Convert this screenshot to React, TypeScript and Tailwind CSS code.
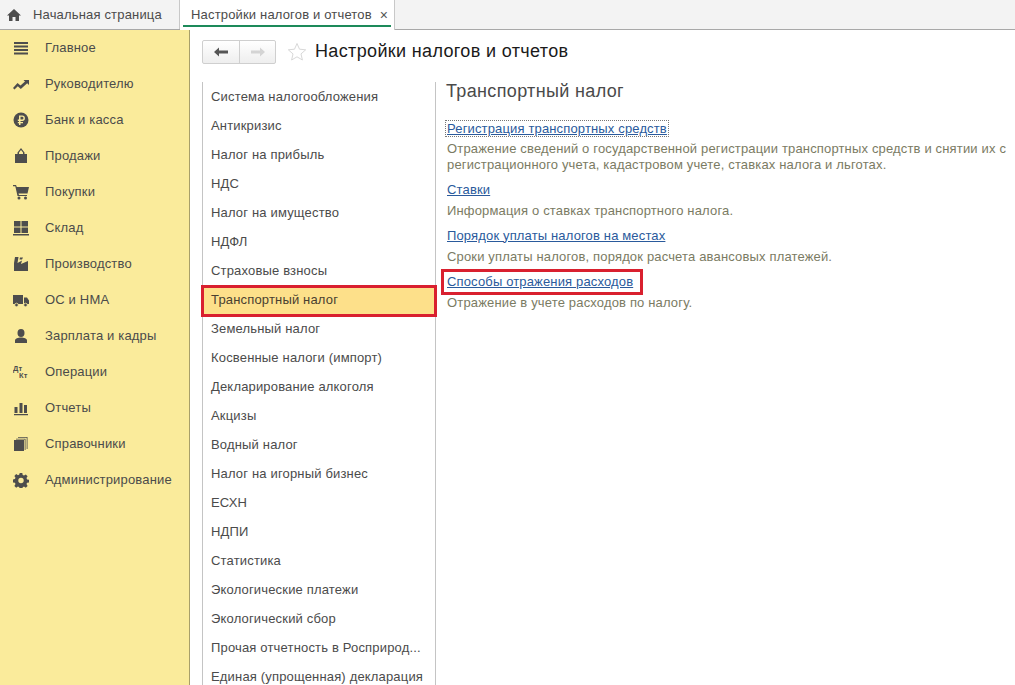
import type { ReactNode } from 'react';

const font = 'font-["Liberation_Sans",Arial,sans-serif]';

const Ico = ({ children }: { children: ReactNode }) => (
  <svg viewBox="0 0 16 16" className="w-4 h-4 shrink-0 text-[#4d4d4d]" fill="currentColor">
    {children}
  </svg>
);

const menu: { label: string; icon: ReactNode }[] = [
  {
    label: 'Главное',
    icon: <path d="M1 2h14v2H1zM1 5.500h14v2H1zM1 9h14v2H1zM1 12.500h14v2H1z" />,
  },
  {
    label: 'Руководителю',
    icon: <path d="M0 12l4.500-5 3 2.500L12 5.500 10.500 4H16v5l-1.800-1.800L7.800 13 4.800 10.300 1.500 13.500z" />,
  },
  {
    label: 'Банк и касса',
    icon: (
      <>
        <circle cx="8" cy="8" r="7.500" />
        <path fill="#faeb9b" d="M6 3.500h3.200a2.700 2.700 0 010 5.400H7.500V10H10v1.300H7.500V13H6v-1.700H4.800V10H6V8.900H4.800V7.600H6zm1.500 1.300v2.800h1.600a1.400 1.400 0 000-2.800z" />
      </>
    ),
  },
  {
    label: 'Продажи',
    icon: <path fillRule="evenodd" d="M2 6h2.500V4.500L8 0l3.500 4.500V6H14v9H2zM6 6h4V4.500L8 2 6 4.500z" />,
  },
  {
    label: 'Покупки',
    icon: (
      <>
        <path d="M0 1h3l.8 2H16l-1.500 6.500H5.500L6 11h8v1H4.500L2.300 2.300H0z" />
        <circle cx="6" cy="14" r="1.500" />
        <circle cx="12.500" cy="14" r="1.500" />
      </>
    ),
  },
  {
    label: 'Склад',
    icon: <path d="M1 1h6.500v5.500H1zM8.500 1H15v5.500H8.500zM1 7.500h6.500V13H1zM8.500 7.500H15V13H8.500zM0 14h16v1.500H0z" />,
  },
  {
    label: 'Производство',
    icon: <path d="M1 15V7l1-6h3.500l-1 6L9 4.500 8 8l7-3v10zM7 1.500h3L9 3.500H6.500z" />,
  },
  {
    label: 'ОС и НМА',
    icon: (
      <>
        <path d="M0 3h10v9H0zM11 5.500h3l2 3V12h-5z" />
        <circle cx="3.500" cy="13" r="1.800" stroke="#faeb9b" strokeWidth="0.800" />
        <circle cx="12.500" cy="13" r="1.800" stroke="#faeb9b" strokeWidth="0.800" />
      </>
    ),
  },
  {
    label: 'Зарплата и кадры',
    icon: (
      <>
        <ellipse cx="8" cy="5" rx="3.500" ry="4" />
        <path d="M2 15v-2.500C2 10.500 5 9.500 8 9.500s6 1 6 3V15z" />
      </>
    ),
  },
  {
    label: 'Операции',
    icon: (
      <>
        <text x="0" y="7" fontSize="7.500" fontWeight="700" fontFamily="Liberation Sans">Дт</text>
        <text x="6" y="14" fontSize="7.500" fontWeight="700" fontFamily="Liberation Sans">Кт</text>
      </>
    ),
  },
  {
    label: 'Отчеты',
    icon: <path d="M1.500 7h3v6h-3zM6.500 3h3v10h-3zM11 5h3v8h-3zM1 14h14v1.200H1z" />,
  },
  {
    label: 'Справочники',
    icon: (
      <>
        <path d="M1 4h10v11H1z" />
        <path d="M3 2.700h9.500V14h-.8V3.500H3zM5 1h9.500v12h-.8V1.800H5z" />
      </>
    ),
  },
  {
    label: 'Администрирование',
    icon: (
      <path
        fillRule="evenodd"
        d="M6.700 1h2.600l.4 2 1.300.6 1.800-1.100 1.800 1.800-1.100 1.800.6 1.300 2 .4v2.600l-2 .4-.6 1.300 1.100 1.800-1.800 1.800-1.800-1.100-1.300.6-.4 2H6.700l-.4-2-1.300-.6-1.800 1.100-1.800-1.800 1.100-1.800-.6-1.300-2-.4V7.400l2-.4.600-1.300-1.100-1.800 1.800-1.800 1.800 1.100 1.300-.6zM8 5.800a2.700 2.700 0 100 5.400 2.700 2.700 0 000-5.400z"
      />
    ),
  },
];

const sections = [
  'Система налогообложения',
  'Антикризис',
  'Налог на прибыль',
  'НДС',
  'Налог на имущество',
  'НДФЛ',
  'Страховые взносы',
  'Транспортный налог',
  'Земельный налог',
  'Косвенные налоги (импорт)',
  'Декларирование алкоголя',
  'Акцизы',
  'Водный налог',
  'Налог на игорный бизнес',
  'ЕСХН',
  'НДПИ',
  'Статистика',
  'Экологические платежи',
  'Экологический сбор',
  'Прочая отчетность в Росприрод...',
  'Единая (упрощенная) декларация',
];

const links = [
  {
    title: 'Регистрация транспортных средств',
    text: [
      'Отражение сведений о государственной регистрации транспортных средств и снятии их с',
      'регистрационного учета, кадастровом учете, ставках налога и льготах.',
    ],
    focus: true,
  },
  { title: 'Ставки', text: ['Информация о ставках транспортного налога.'] },
  {
    title: 'Порядок уплаты налогов на местах',
    text: ['Сроки уплаты налогов, порядок расчета авансовых платежей.'],
  },
  {
    title: 'Способы отражения расходов',
    text: ['Отражение в учете расходов по налогу.'],
    marked: true,
  },
];

export default function App() {
  return (
    <div className={`${font} w-[1015px] h-[685px] overflow-hidden bg-white flex flex-col text-[13px] tracking-[0.17px] text-[#4b4b4b]`}>
      {/* tabs */}
      <div className="h-[30px] shrink-0 flex bg-[#f3f3f3] border-b border-[#a8a8a8]">
        <div className="w-[180px] flex items-center border-r border-[#c8c8c8]">
          <svg viewBox="0 0 16 16" className="w-4 h-4 ml-[6px] text-[#4d4d4d]" fill="currentColor">
            <path d="M8 2L1 8.500h2V14h3.500v-4h3v4H13V8.500h2z" />
          </svg>
          <span className="ml-[11px]">Начальная страница</span>
        </div>
        <div className="w-[215px] h-[30px] bg-white border-r border-[#c8c8c8] relative flex items-center pl-[11px]">
          <span>Настройки налогов и отчетов</span>
          <span className="ml-[8px] text-[#555] text-[14px] leading-none">×</span>
          <div className="absolute left-[3px] right-[3px] bottom-[3px] h-[2px] bg-[#1d8a5a]" />
        </div>
      </div>

      <div className="flex-1 flex min-h-0">
        {/* sidebar */}
        <div className="w-[190px] shrink-0 bg-[#faeb9b] border-r border-[#a89f6a] flex flex-col">
          {menu.map((m) => (
            <div key={m.label} className="h-[36px] flex items-center pl-[13px] gap-[16px]">
              <Ico>{m.icon}</Ico>
              <span className="whitespace-nowrap">{m.label}</span>
            </div>
          ))}
        </div>

        <div className="flex-1 min-w-0 flex flex-col pl-[12px]">
          {/* title */}
          <div className="h-[52px] shrink-0 flex items-center pb-[9px]">
            <div className="flex h-[24px] w-[74px] border border-[#cfcfcf] rounded-[2px] bg-gradient-to-b from-white to-[#eeeeee]">
              <div className="w-[37px] flex items-center justify-center border-r border-[#cfcfcf]">
                <svg viewBox="0 0 14 10" className="w-[14px] h-[10px] text-[#555]" fill="currentColor">
                  <path d="M0 5l5-4.500V3.500h9v3H5v3z" />
                </svg>
              </div>
              <div className="flex-1 flex items-center justify-center">
                <svg viewBox="0 0 14 10" className="w-[14px] h-[10px] text-[#d4d4d4]" fill="currentColor">
                  <path d="M14 5L9 .5V3.500H0v3h9v3z" />
                </svg>
              </div>
            </div>
            <svg viewBox="0 0 20 20" className="w-[20px] h-[20px] ml-[11px] text-[#d8d8d8]" fill="none" stroke="currentColor">
              <path d="M10 1.500l2.500 5.700 6.200.6-4.700 4.100 1.400 6.100L10 14.800l-5.400 3.200L6 11.900 1.300 7.800l6.200-.6z" />
            </svg>
            <span className="ml-[8px] text-[18px] tracking-[0.35px] text-[#1a1a1a]">Настройки налогов и отчетов</span>
          </div>

          <div className="flex-1 flex min-h-0">
            {/* sections list */}
            <div className="w-[234px] shrink-0 border-l border-r border-[#c4c4c4] flex flex-col">
              {sections.map((s) => {
                const active = s === 'Транспортный налог';
                return (
                  <div key={s} className="relative h-[29px] shrink-0 flex items-center pl-[8px] whitespace-nowrap">
                    {active && (
                      <div className="absolute -left-[2px] -right-[2px] top-0 -bottom-[3px] bg-[#fde08a] border-[3px] border-[#d9202f]" />
                    )}
                    <span className={active ? 'relative text-[#4a4030]' : ''}>{s}</span>
                  </div>
                );
              })}
            </div>

            {/* details */}
            <div className="flex-1 min-w-0 pl-[10px]">
              <div className="text-[18px] text-[#4a4a4a] leading-[22px] -mt-[2px] tracking-[0.35px]">Транспортный налог</div>
              <div className="mt-[16px] flex flex-col">
                {links.map((l) => (
                  <div key={l.title} className="mb-[6px]">
                    <div className="flex h-[20px] items-center">
                      <span
                        className={`relative px-px leading-[15px] underline text-[#2a5a9c] whitespace-nowrap tracking-[0.15px] ${l.focus ? 'outline-1 outline-dotted outline-[#777]' : ''}`}
                      >
                        {l.marked && (
                          <span className="absolute -left-[5px] -right-[9px] -top-[5px] -bottom-[6px] border-[3px] border-[#d9202f]" />
                        )}
                        {l.title}
                      </span>
                    </div>
                    <div className={l.focus ? 'mt-[3px]' : 'mt-[4px]'}>
                      {l.text.map((t) => (
                        <div key={t} className="leading-[16px] text-[#7b7b63] whitespace-nowrap pl-px tracking-[0.16px]">
                          {t}
                        </div>
                      ))}
                    </div>
                  </div>
                ))}
              </div>
            </div>
          </div>
        </div>
      </div>
    </div>
  );
}
